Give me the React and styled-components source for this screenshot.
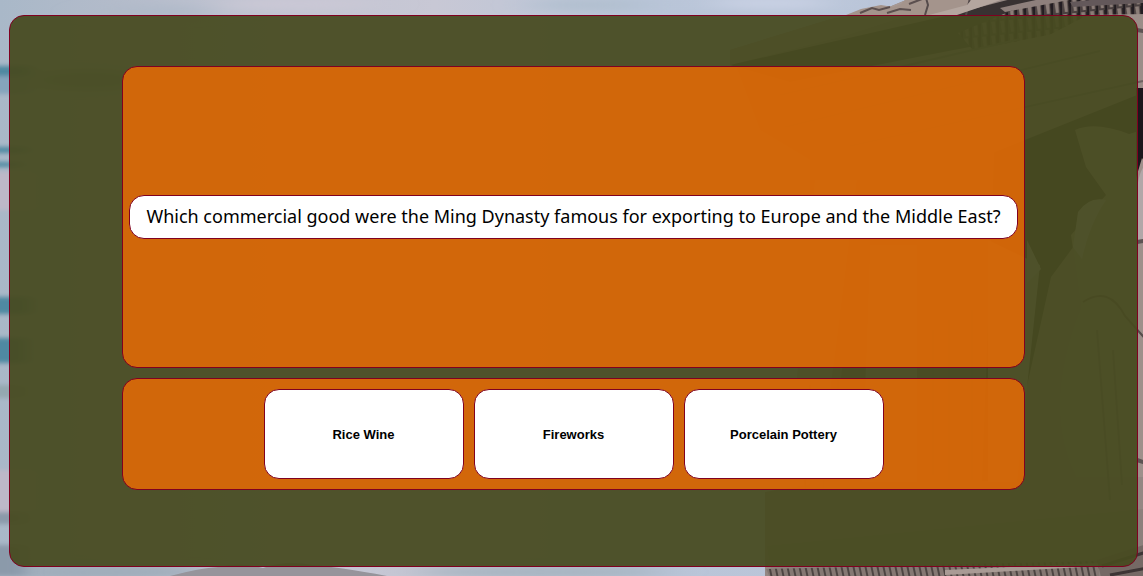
import React from "react";
import styled, { createGlobalStyle } from "styled-components";

const burgundy = "#800020";

const GlobalStyle = createGlobalStyle`
  *, *::before, *::after { box-sizing: border-box; }
  body { margin: 0; background: #b3bdcb; color: #000; }
`;

const Page = styled.div`
  position: relative;
  min-height: 100vh;
  padding: 15px 5px 9px 9px;
  display: flex;
`;

const Scenery = styled.svg`
  position: absolute;
  inset: 0;
  width: 100%;
  height: 100%;
`;

const Board = styled.main`
  position: relative;
  flex: 1;
  display: flex;
  flex-direction: column;
  align-items: center;
  gap: 10px;
  padding: 50px 0;
  border: 1px solid ${burgundy};
  border-radius: 15px;
  background: rgba(71, 74, 32, 0.94);
`;

const Card = styled.section`
  box-sizing: content-box;
  width: 80%;
  display: flex;
  align-items: center;
  justify-content: center;
  border: 1px solid ${burgundy};
  border-radius: 15px;
  background: rgba(243, 109, 3, 0.8);
`;

const QuestionCard = styled(Card)`
  min-height: 300px;
`;

const AnswerCard = styled(Card)`
  flex-wrap: wrap;
  gap: 10px;
  min-height: 110px;
`;

const Question = styled.h1`
  flex: 1;
  margin: 0 6px;
  padding: 8px 10px 10px;
  border: 1px solid ${burgundy};
  border-radius: 15px;
  background: #fff;
  font: 400 18px/24px "Noto Sans", sans-serif;
  text-align: center;
`;

const Answer = styled.button`
  width: 200px;
  height: 90px;
  padding: 2px 6px 0;
  border: 1px solid ${burgundy};
  border-radius: 15px;
  background: #fff;
  color: #000;
  font: 700 13px/16px "Liberation Sans", Arial, sans-serif;
  cursor: pointer;
`;

const answers = ["Rice Wine", "Fireworks", "Porcelain Pottery"];

function Temple() {
  return (
    <Scenery viewBox="0 0 1143 576" preserveAspectRatio="xMidYMid slice" aria-hidden="true">
      <defs>
        <linearGradient id="sky" x1="0" x2="1" y1="0" y2="0">
          <stop offset="0" stopColor="#a9b8c8" />
          <stop offset="0.1" stopColor="#b3bbca" />
          <stop offset="0.2" stopColor="#bec2d0" />
          <stop offset="0.38" stopColor="#c8c8d5" />
          <stop offset="0.55" stopColor="#b9c5d8" />
          <stop offset="1" stopColor="#bcc6da" />
        </linearGradient>
        <filter id="cloud" x="-50%" y="-100%" width="200%" height="300%">
          <feGaussianBlur stdDeviation="18 4" />
        </filter>
        <filter id="streak" x="-50%" y="-20%" width="200%" height="140%">
          <feGaussianBlur stdDeviation="8 2" />
        </filter>
        <filter id="photo" x="0" y="0" width="100%" height="100%">
          <feGaussianBlur stdDeviation="0.7" />
        </filter>
        <pattern id="dentils" width="9" height="14" patternUnits="userSpaceOnUse" patternTransform="skewY(-6)">
          <path d="M0 0h9v14H0z" fill="#4a4040" />
          <path d="M1 0h4l1 12H3z" fill="#8b7d78" />
          <path d="M6 0h3v14H7z" fill="#241e20" />
        </pattern>
        <pattern id="teeth" width="6" height="20" patternUnits="userSpaceOnUse" patternTransform="skewX(12)">
          <path d="M0 0h6v20H0z" fill="#857873" />
          <path d="M0 0h2v20H0z" fill="#4d4443" />
        </pattern>
      </defs>
      <path d="M0 0h1143v576H0z" fill="url(#sky)" />
      <g filter="url(#cloud)">
        <ellipse cx="150" cy="12" rx="60" ry="7" fill="#b0bac9" />
        <ellipse cx="300" cy="4" rx="80" ry="7" fill="#cac8d5" />
        <ellipse cx="590" cy="5" rx="60" ry="6" fill="#b1bfcf" />
        <ellipse cx="770" cy="3" rx="60" ry="7" fill="#c8d0e3" />
        <ellipse cx="90" cy="80" rx="60" ry="10" fill="#8299a3" />
        <ellipse cx="100" cy="572" rx="110" ry="7" fill="#9eacb9" />
        <ellipse cx="540" cy="572" rx="130" ry="6" fill="#a5b3bf" />
      </g>
      <g fill="#5089a2" filter="url(#streak)">
        <path d="M-40 66h70v10h-70zM-40 147h66v6h-66zM-40 162h60v5h-60zM-40 297h70v17h-70zM-40 338h66v25h-66z" />
        <path d="M-40 76h70v18h-70z" fill="#85a4bc" />
        <path d="M-40 172h70v38h-70zM-40 470h70v42h-70z" fill="#bdb8c8" />
        <path d="M-40 385h66v13h-66z" fill="#94a8b0" />
        <path d="M-40 512h66v12h-66zM-40 545h66v31h-66z" fill="#8b9aaa" />
      </g>
      <g filter="url(#photo)">
        <path d="M170 576q30-8 48-9 22-5 45 1 23-8 49-3 27 2 75 11z" fill="#96949b" />
        <path d="M730 50l101-31 46-7 29-12h247v586H765V492l45-8V160l-50-30z" fill="#948783" />
        <path d="M730 50l101-31 46-7 29-12h80l-73 14-68 22-115 29z" fill="#a79994" />
        <path d="M730 65l220-50 65-17h138v15l-84 15-126 24-153 30z" fill="#393333" />
        <path d="M846 15l15-6 20-4 12 2 8-3 6-6h90l-44 17z" fill="#a4948c" />
        <path d="M860 13l12-5 7 2 11-3M887 13l13-4 11 1M909 4l13-5" stroke="#5b504f" strokeWidth="2" fill="none" />
        <path d="M926-2l2 7-3 10M970-2l-4 17" stroke="#554b4b" strokeWidth="2" fill="none" />
        <path d="M973-2h34l-50 17h-28l38-10z" fill="#b4a69f" />
        <path d="M1018 8l45-10h85v22l-70 9-105 21-15-17z" fill="url(#dentils)" />
        <path d="M1000 8l45-10h35l-75 14z" fill="#8e807c" />
        <path d="M1070 2l73-7v8l-70 4z" fill="#64595a" />
        <path d="M1088 15l62-1v76l-197 41-60-15z" fill="#9b8d88" />
        <path d="M780 95l240-56M785 127l315-76M850 146l293-65" stroke="#6d6260" strokeWidth="2" />
        <path d="M1150 90v92l-42 18-57 77-25 113-14 91h-46l9-321z" fill="#272122" />
        <path d="M815 161l180-25-13 351H827l18-140z" fill="#736967" />
        <path d="M870 245h47v237h-55zM988 240l52 25-23 217h-29zM815 180h42l-15 120-23 175h-31z" fill="#a5a5ae" />
        <path d="M1075 130q20-9 54 4l24-7v350h-77q-35-70 5-170l-10-72 35-40-20-28z" fill="#9e908b" />
        <path d="M1078 212q11-16 28-12-16 23-24 59l-9-12zM1027 240l14 29-14 14z" fill="#b9bec9" />
        <path d="M1083 302q26-17 42 14l24 27" stroke="#564c4b" strokeWidth="2" fill="none" />
        <path d="M1136 88h14v82l-8-12-6 20z" fill="#1d191a" />
        <path d="M1137 191q2-24 12-29v78h-12z" fill="#b1a7a8" />
        <path d="M1137 242l12-2M1137 460l12 4M1137 30l12 2" stroke="#5d5352" strokeWidth="4" />
        <path d="M767 546l386-38v78H774z" fill="#8c807b" />
        <path d="M766 569l333-8v25H774z" fill="url(#teeth)" />
        <path d="M945 570l155-7v3l-155 9z" fill="#a99b95" />
        <path d="M1097 560l56-18v44h-50z" fill="#746965" />
        <path d="M1102 566l51-16M1110 575l43-8" stroke="#3c3434" strokeWidth="3" />
        <path d="M805 490l5-105M824 490l-6-90M838 480V380M933 475V330M949 480V320M972 480V310M1110 500l-13-170M1122 485l-9-135" stroke="#6e6461" strokeWidth="2" />
      </g>
    </Scenery>
  );
}

export default function App() {
  return (
    <>
      <GlobalStyle />
      <Page>
        <Temple />
        <Board>
          <QuestionCard>
            <Question>
              Which commercial good were the Ming Dynasty famous for exporting to Europe and the Middle East?
            </Question>
          </QuestionCard>
          <AnswerCard>
            {answers.map((answer) => (
              <Answer key={answer} type="button">{answer}</Answer>
            ))}
          </AnswerCard>
        </Board>
      </Page>
    </>
  );
}
